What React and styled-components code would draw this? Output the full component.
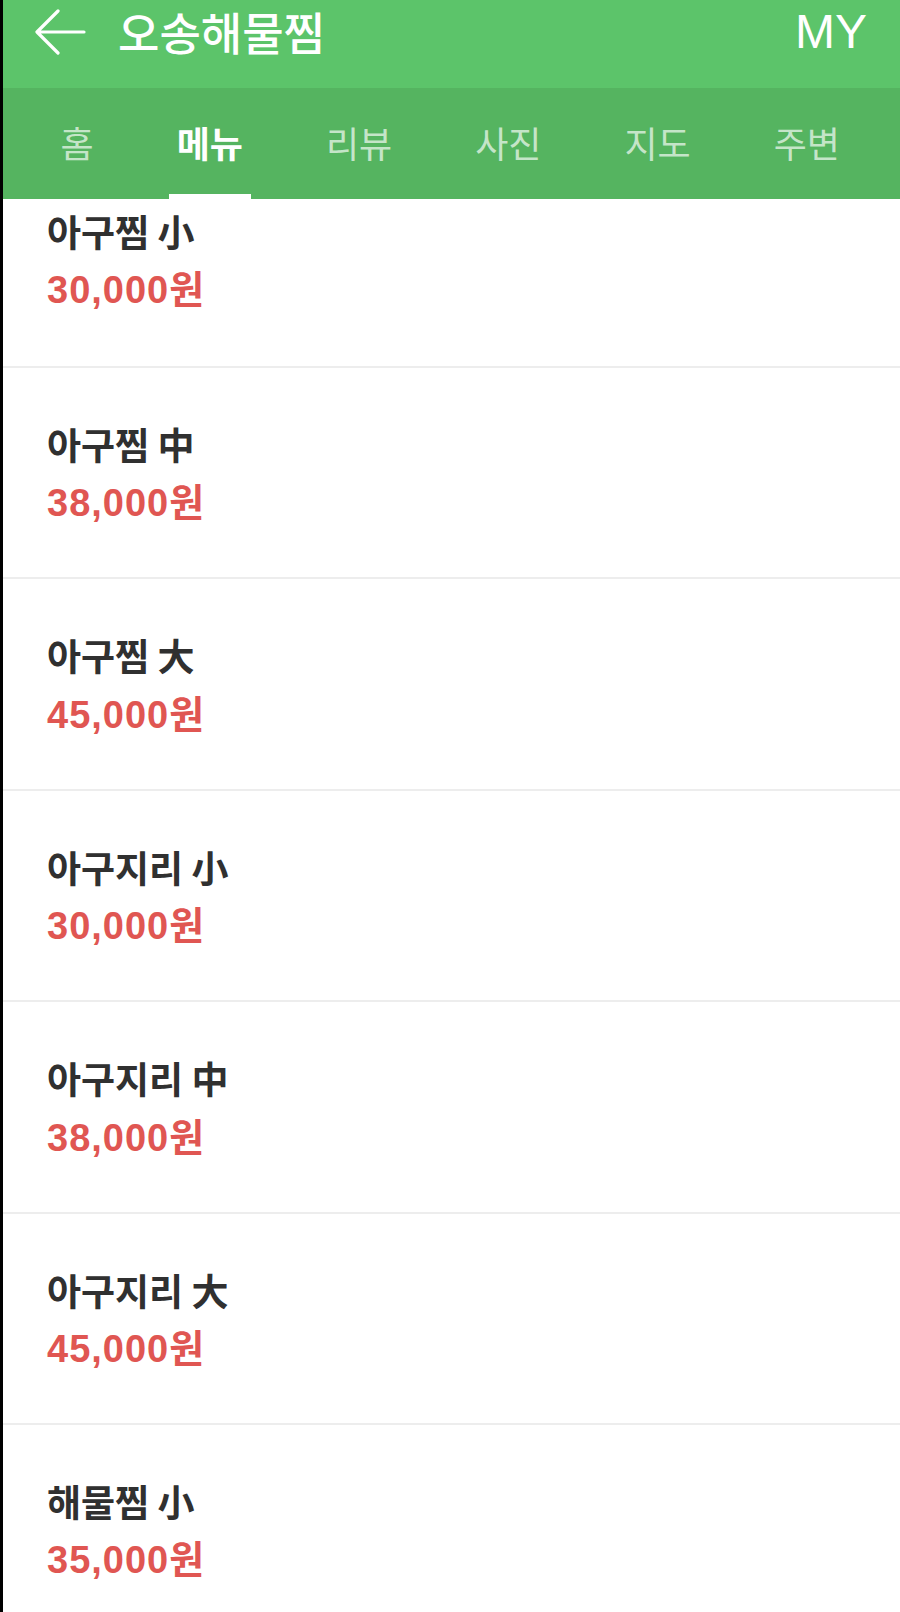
import React from "react";
import styled, { createGlobalStyle } from "styled-components";

const GlobalStyle = createGlobalStyle`
  html, body {
    margin: 0;
    padding: 0;
    background: #ffffff;
    overflow: hidden;
  }
  * {
    box-sizing: border-box;
  }
`;

const tabs = ["홈", "메뉴", "리뷰", "사진", "지도", "주변"];

const menu = [
  { name: "아구찜 小", price: "30,000원" },
  { name: "아구찜 中", price: "38,000원" },
  { name: "아구찜 大", price: "45,000원" },
  { name: "아구지리 小", price: "30,000원" },
  { name: "아구지리 中", price: "38,000원" },
  { name: "아구지리 大", price: "45,000원" },
  { name: "해물찜 小", price: "35,000원" },
];

export default function App() {
  return (
    <Screen>
      <GlobalStyle />
      <Header>
        <TopBar>
          <BackButton aria-label="뒤로">
            <svg width="52" height="46" viewBox="0 0 52 46" fill="none">
              <path
                d="M50 23 H4 M24 2 L3 23 L24 44"
                stroke="#ffffff"
                strokeWidth="3.2"
                strokeLinecap="round"
                strokeLinejoin="round"
              />
            </svg>
          </BackButton>
          <Title>오송해물찜</Title>
          <MyLink>MY</MyLink>
        </TopBar>
        <TabBar>
          {tabs.map((t) => (
            <Tab key={t}>
              <TabLabel $active={t === "메뉴"}>{t}</TabLabel>
            </Tab>
          ))}
        </TabBar>
      </Header>
      <MenuList>
        {menu.map((item, i) => (
          <MenuRow key={i} $clipped={i === 0}>
            <ItemName>{item.name}</ItemName>
            <ItemPrice>{item.price}</ItemPrice>
          </MenuRow>
        ))}
      </MenuList>
    </Screen>
  );
}

const Screen = styled.div`
  width: 100%;
  height: 100vh;
  overflow: hidden;
  border-left: 3px solid #000000;
  background: #ffffff;
  display: flex;
  flex-direction: column;
  font-family: "Noto Sans CJK KR", "Noto Sans", sans-serif;
`;

const Header = styled.header`
  flex-shrink: 0;
  display: flex;
  flex-direction: column;
`;

const TopBar = styled.div`
  height: 88px;
  background: #5cc46a;
  display: flex;
  align-items: center;
  padding: 0 33px 24px 31px;
  color: #ffffff;
`;

const BackButton = styled.div`
  width: 52px;
  height: 46px;
  display: flex;
  align-items: center;
  justify-content: center;
  margin-right: 32px;
`;

const Title = styled.h1`
  margin: 0;
  flex: 1;
  font-size: 45px;
  font-weight: 500;
  line-height: 64px;
  color: #ffffff;
  white-space: nowrap;
`;

const MyLink = styled.div`
  font-family: "Liberation Sans", "Noto Sans", sans-serif;
  font-size: 48px;
  font-weight: 400;
  line-height: 1.2;
  color: #ffffff;
`;

const TabBar = styled.nav`
  height: 111px;
  background: #55b460;
  display: flex;
  align-items: stretch;
  padding-left: 16px;
`;

const Tab = styled.div`
  display: flex;
  align-items: stretch;
  padding: 0 41.5px;
`;

const TabLabel = styled.span`
  position: relative;
  display: flex;
  align-items: center;
  font-size: 36px;
  font-weight: ${(p) => (p.$active ? 700 : 400)};
  color: ${(p) => (p.$active ? "#ffffff" : "rgba(255, 255, 255, 0.68)")};
  padding-bottom: 4px;

  &::after {
    content: "";
    display: ${(p) => (p.$active ? "block" : "none")};
    position: absolute;
    left: -8px;
    right: -8px;
    bottom: 0;
    height: 5px;
    background: #ffffff;
  }
`;

const MenuList = styled.ul`
  list-style: none;
  margin: 0;
  padding: 0;
`;

const MenuRow = styled.li`
  height: ${(p) => (p.$clipped ? "169px" : "211.4px")};
  padding: ${(p) => (p.$clipped ? "10px" : "54px")} 44px 0;
  border-bottom: 2px solid #ededed;
  display: flex;
  flex-direction: column;
  gap: 15px;
`;

const ItemName = styled.div`
  font-size: 37px;
  font-weight: 700;
  line-height: 1.2;
  color: #303030;
`;

const ItemPrice = styled.div`
  font-family: "Liberation Sans", "Noto Sans CJK KR", sans-serif;
  font-size: 38px;
  font-weight: 700;
  letter-spacing: 1px;
  line-height: 1.2;
  color: #e05652;
`;
